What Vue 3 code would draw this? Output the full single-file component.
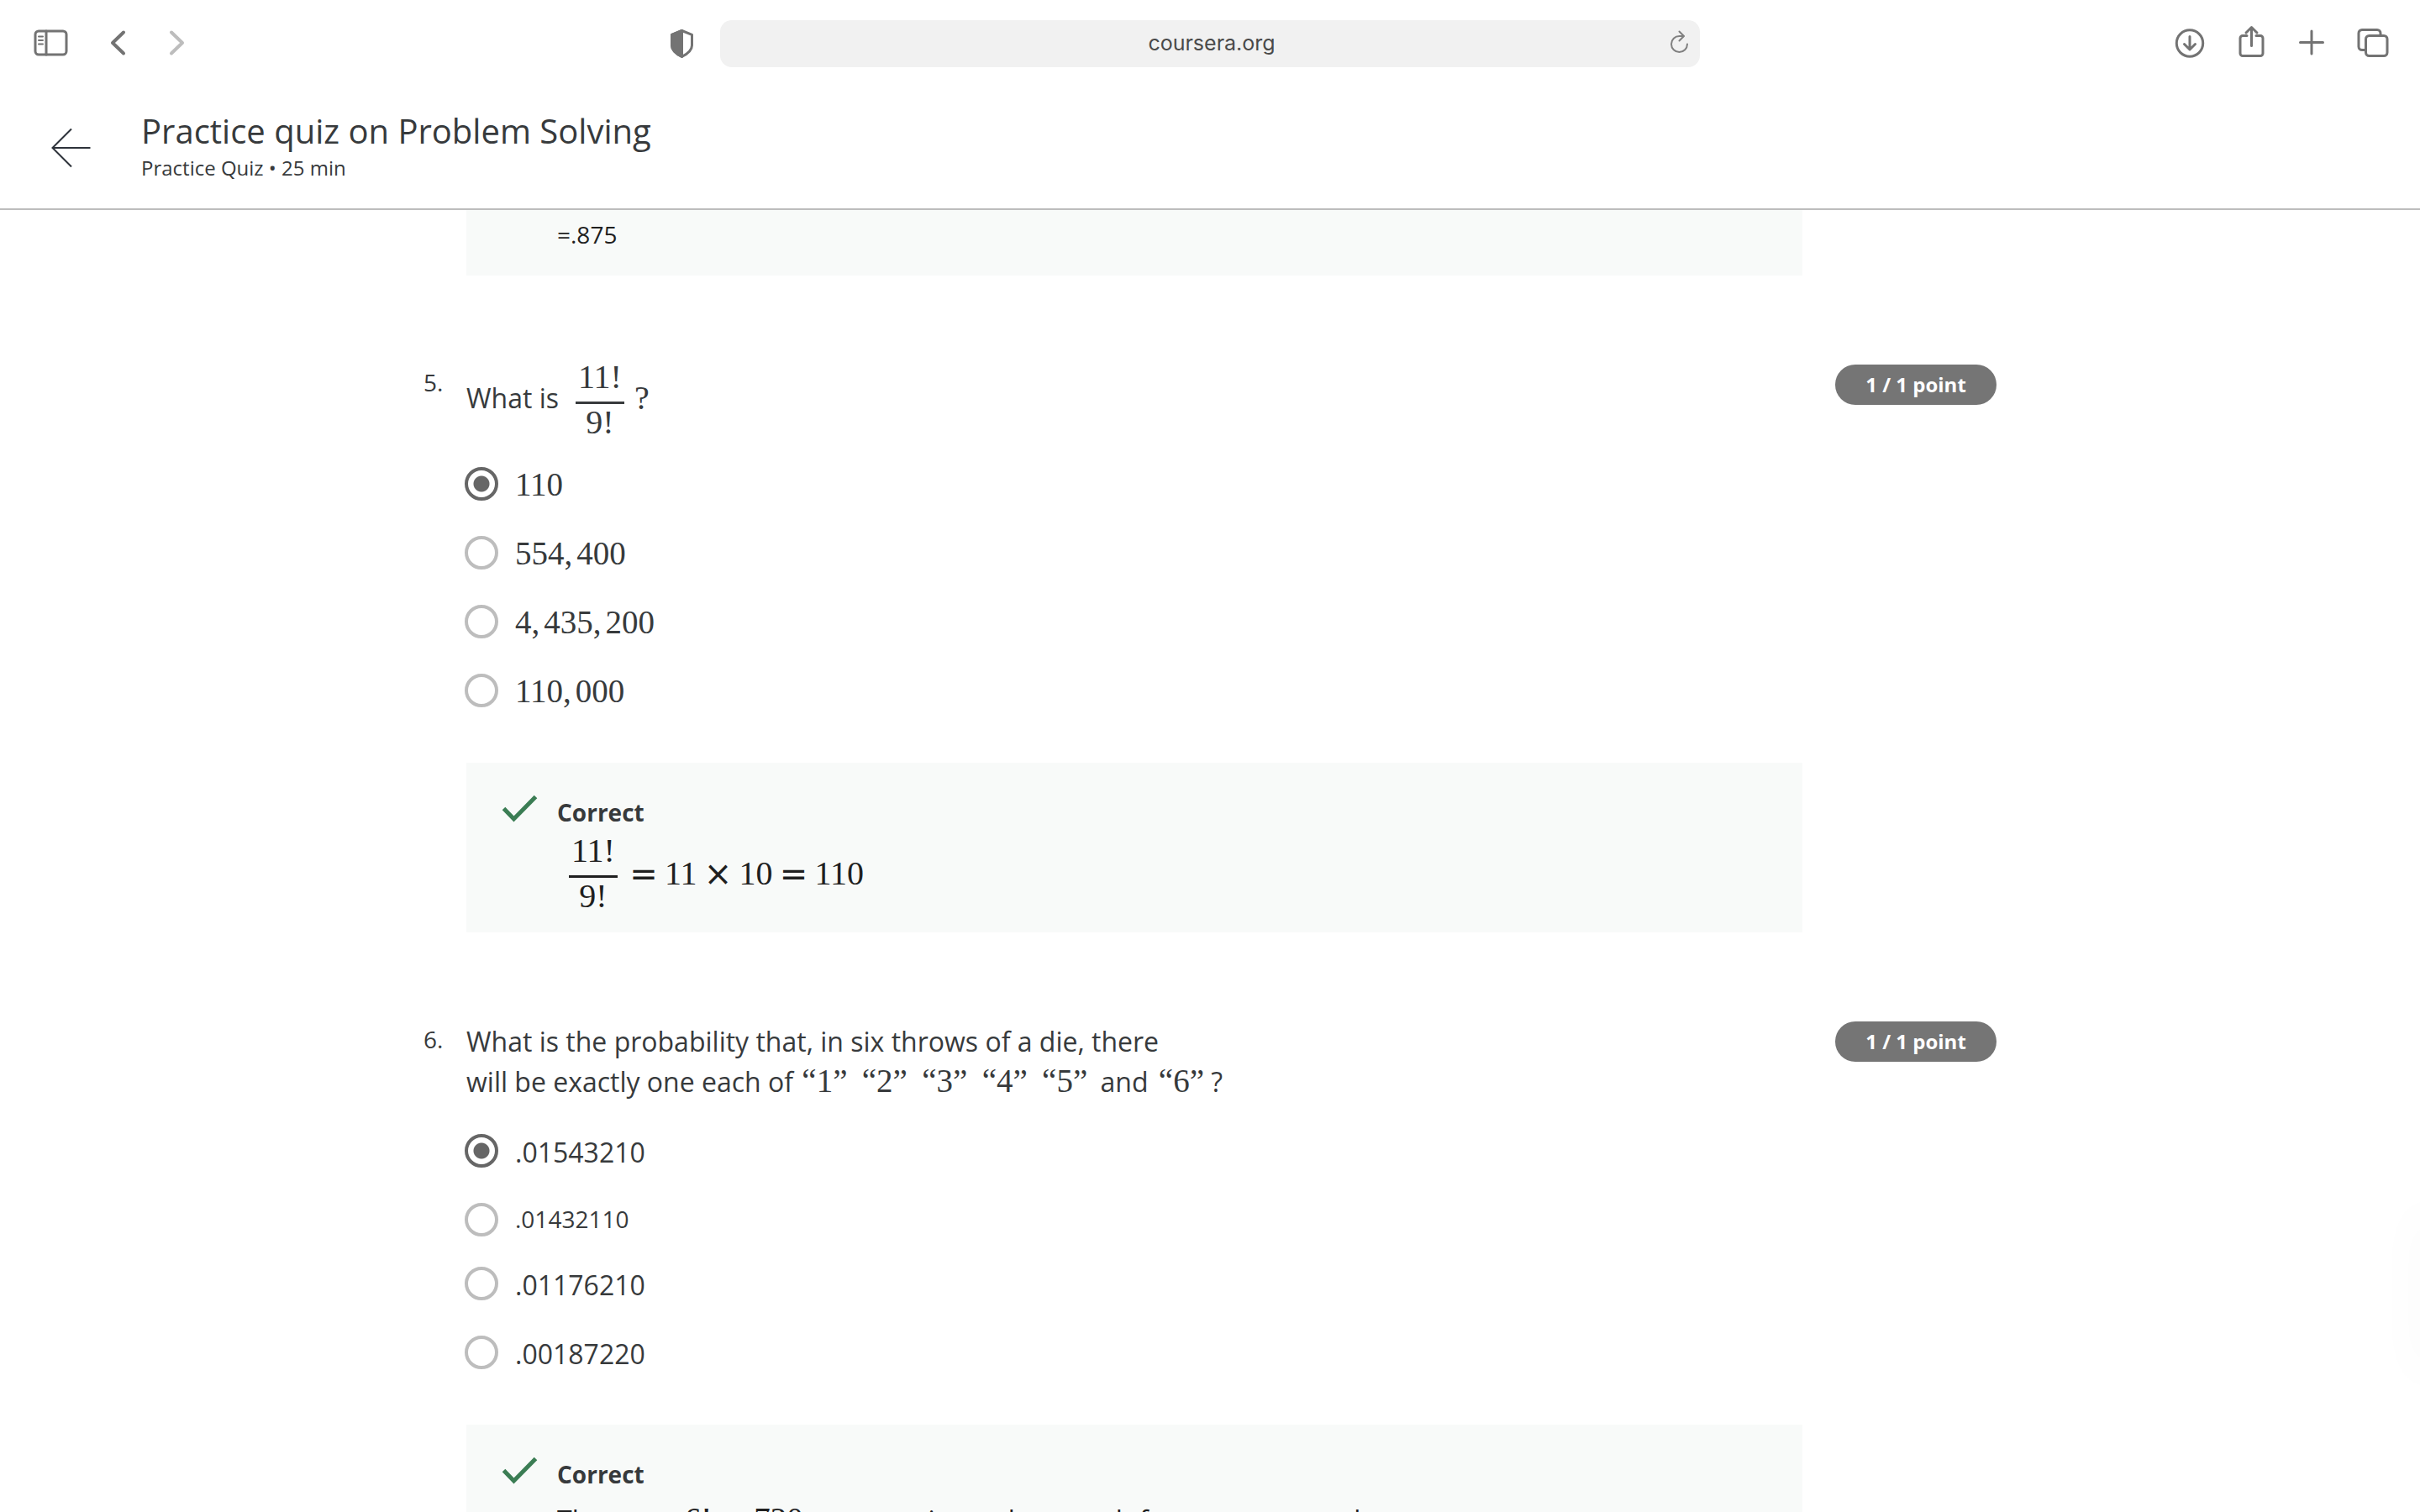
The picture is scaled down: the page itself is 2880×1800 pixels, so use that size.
<script setup>
import { ref } from 'vue'

const answer5 = ref('110')
const answer6 = ref('.01543210')

// Thousands groups are set apart with a thin space, as in display maths
const options5 = [
  { value: '110', groups: ['110'] },
  { value: '554400', groups: ['554,', '400'] },
  { value: '4435200', groups: ['4,', '435,', '200'] },
  { value: '110000', groups: ['110,', '000'] },
]

const options6 = [
  { value: '.01543210' },
  { value: '.01432110', small: true },
  { value: '.01176210' },
  { value: '.00187220' },
]

const faces = ['“1”', '“2”', '“3”', '“4”', '“5”']
</script>

<template>
  <div class="page">
    <nav class="toolbar" aria-label="Browser">
      <div class="tools tools-left">
        <button class="tool" aria-label="Show sidebar">
          <svg viewBox="0 0 40 40">
            <rect x="2" y="5" width="37" height="28" rx="4" />
            <path d="M15 5v28" />
            <path d="M6 11.500h5M6 16h5M6 20.500h5" stroke-width="2" />
          </svg>
        </button>
        <div class="history">
          <button class="tool" aria-label="Back">
            <svg viewBox="0 0 40 40"><path class="thick" d="M27 6.500L14 19l13 12.500" /></svg>
          </button>
          <button class="tool dim" aria-label="Forward">
            <svg viewBox="0 0 40 40"><path class="thick" d="M14 6.500L27 19 14 31.500" /></svg>
          </button>
        </div>
        <button class="tool shield" aria-label="Privacy report">
          <svg viewBox="0 0 40 40">
            <path d="M20.500 4.500L32.500 9.300V22c0 6-5 10-12 13.500C13.500 32 8.500 28 8.500 22V9.300z" />
            <path class="solid" d="M20.500 4.500V35.500C13.500 32 8.500 28 8.500 22V9.300z" />
          </svg>
        </button>
      </div>
      <div class="address">
        <input type="text" aria-label="Address" value="coursera.org" />
        <button class="reload" aria-label="Reload">
          <svg viewBox="0 0 28 32">
            <path d="M23 17.500a9.500 9.500 0 1 1-9.500-9.500h5" />
            <path d="M13.500 2.500l5.500 5.500-5.500 5.500" />
          </svg>
        </button>
      </div>
      <div class="tools tools-right">
        <button class="tool" aria-label="Downloads">
          <svg viewBox="0 0 40 40">
            <circle cx="21" cy="19.500" r="15.700" />
            <path d="M21 11.500v15M14.500 20.500l6.500 6.500 6.500-6.500" />
          </svg>
        </button>
        <button class="tool" aria-label="Share">
          <svg viewBox="0 0 40 40">
            <path d="M16 10.500h-5a3 3 0 0 0-3 3V31.500a3 3 0 0 0 3 3h21a3 3 0 0 0 3-3V13.500a3 3 0 0 0-3-3h-5" />
            <path d="M21.500 22.500V1M15 7l6.500-6.500L28 7" />
          </svg>
        </button>
        <button class="tool" aria-label="New tab">
          <svg viewBox="0 0 40 40"><path d="M20 5v27M6.500 18.500h27" /></svg>
        </button>
        <button class="tool" aria-label="Tab overview">
          <svg viewBox="0 0 40 40">
            <path d="M11.500 27.500H7a4 4 0 0 1-4-4V7.500a4 4 0 0 1 4-4h18a4 4 0 0 1 4 4v2.500" />
            <rect x="11.500" y="10.500" width="25.500" height="24" rx="4" />
          </svg>
        </button>
      </div>
    </nav>

    <header class="quiz-header">
      <a class="back" href="#" aria-label="Back to course">
        <svg viewBox="0 0 48 48"><path d="M47.500 26H2.500M25 3.500L2.500 26 25 48.500" /></svg>
      </a>
      <div>
        <h1>Practice quiz on Problem Solving</h1>
        <p>Practice Quiz • 25 min</p>
      </div>
    </header>

    <main class="quiz">
      <section class="question">
        <div class="feedback tail">
          <div class="feedback-body"><p class="note">=.875</p></div>
        </div>
      </section>

      <section class="question">
        <span class="number">5.</span>
        <div class="body">
          <div class="prompt-math">
            <span class="words">What is</span>
            <span class="fraction"><span class="num">11!</span><span class="den">9!</span></span>
            <span class="words math">?</span>
          </div>
          <div class="options" role="radiogroup" aria-label="Question 5">
            <label v-for="o in options5" :key="o.value" class="option">
              <input v-model="answer5" type="radio" name="q5" :value="o.value" />
              <span class="option-text"><span v-for="g in o.groups" :key="g" class="digits">{{ g }}</span></span>
            </label>
          </div>
        </div>
        <span class="points">1 / 1 point</span>
        <div class="feedback">
          <svg class="check" viewBox="0 0 44 34"><path d="M2.500 16.500L14.500 29 40.500 2.500" /></svg>
          <div class="feedback-body">
            <h2>Correct</h2>
            <div class="equation">
              <span class="fraction"><span class="num">11!</span><span class="den">9!</span></span>
              <span class="op">=</span><span>11</span><span class="op">×</span><span>10</span><span class="op">=</span><span>110</span>
            </div>
          </div>
        </div>
      </section>

      <section class="question">
        <span class="number">6.</span>
        <div class="body">
          <p class="prompt">
            What is the probability that, in six throws of a die, there<br />
            will be exactly one each of
            <template v-for="f in faces" :key="f"><span class="face">{{ f }}</span>{{ ' ' }}</template>
            and <span class="face last">“6”</span> ?
          </p>
          <div class="options" role="radiogroup" aria-label="Question 6">
            <label v-for="o in options6" :key="o.value" class="option" :class="{ small: o.small }">
              <input v-model="answer6" type="radio" name="q6" :value="o.value" />
              <span class="option-text">{{ o.value }}</span>
            </label>
          </div>
        </div>
        <span class="points">1 / 1 point</span>
        <div class="feedback">
          <svg class="check" viewBox="0 0 44 34"><path d="M2.500 16.500L14.500 29 40.500 2.500" /></svg>
          <div class="feedback-body">
            <h2>Correct</h2>
            <p class="explain">
              There are <span class="digits">6!<span class="equals">=</span>720</span> permutations where each face occurs exactly once.
            </p>
          </div>
        </div>
      </section>
    </main>
    <div class="edge-shadow"></div>
  </div>
</template>

<style>
body {
  margin: 0;
  background: #fff;
}
</style>

<style scoped>
.page {
  position: relative;
  display: flex;
  flex-direction: column;
  height: 100vh;
  overflow: hidden;
  font-family: "Open Sans", "Noto Sans", sans-serif;
  color: #373a3c;
}
h1,
h2,
p {
  margin: 0;
  font-weight: 400;
}
button {
  padding: 0;
  border: 0;
  background: none;
}
svg {
  display: block;
  overflow: visible;
  fill: none;
  stroke: currentColor;
  stroke-width: 3;
  stroke-linecap: round;
  stroke-linejoin: round;
}

.toolbar {
  flex: none;
  display: grid;
  grid-template-columns: 1fr minmax(0, 1166px) 1fr;
  align-items: center;
  height: 104px;
  color: #737373;
}
.tools {
  display: flex;
  align-items: center;
}
.tools-left {
  gap: 40px;
  padding: 0 26px 0 40px;
}
.history {
  display: flex;
  gap: 30px;
}
.tools-right {
  justify-content: flex-end;
  gap: 33px;
  padding-right: 36px;
}
.tool {
  width: 40px;
  height: 40px;
  color: inherit;
}
.tool.dim {
  color: #bdbdbd;
}
.thick {
  stroke-width: 4;
}
.solid {
  fill: currentColor;
}
.shield {
  margin-left: auto;
}
.address {
  position: relative;
}
.address input {
  display: block;
  box-sizing: border-box;
  width: 100%;
  height: 56px;
  padding: 0 46px 2px 50px;
  border: 0;
  border-radius: 14px;
  background: #f1f1f1;
  color: #4a4a4a;
  font: 25px/32px Inter, sans-serif;
  text-align: center;
}
.reload {
  position: absolute;
  top: 11px;
  right: 10px;
  width: 28px;
  height: 32px;
  color: #808080;
}
.reload svg {
  stroke-width: 2;
}

.quiz-header {
  flex: none;
  display: flex;
  align-items: center;
  gap: 60px;
  padding: 28px 60px 32px;
  border-bottom: 2px solid #bdbdbd;
}
.back {
  width: 48px;
  color: #2d323a;
}
.back svg {
  stroke-width: 2;
  stroke-linecap: butt;
  stroke-linejoin: miter;
}
.quiz-header h1 {
  font-size: 40px;
  line-height: 48px;
}
.quiz-header p {
  margin-top: 4px;
  font-size: 24px;
  line-height: 32px;
}

.quiz {
  flex: 1;
  min-height: 0;
  overflow: hidden;
  box-sizing: border-box;
  width: 100%;
  max-width: 1872px;
  margin: 0 auto;
}
.question {
  display: grid;
  grid-template-columns: 51px 1fr 39px 192px;
  align-items: start;
  margin-bottom: 106px;
}
.number {
  font-size: 28px;
  line-height: 42px;
}
.points {
  grid-column: 4;
  border-radius: 24px;
  background: #757575;
  color: #fff;
  font-size: 24px;
  font-weight: 700;
  line-height: 48px;
  text-align: center;
}
.prompt {
  font-size: 32px;
  line-height: 48px;
}
.prompt-math {
  display: flex;
  align-items: flex-start;
  font-size: 32px;
  line-height: 48px;
}
.words {
  margin-top: 16px;
}
.math,
.fraction,
.equation {
  font-family: "Liberation Serif", serif;
  font-size: 40px;
}
.prompt-math .fraction {
  margin: 0 12px 0 20px;
}
.fraction {
  flex: none;
  display: flex;
  flex-direction: column;
  width: 58px;
  text-align: center;
}
.num {
  padding-bottom: 14px;
  border-bottom: 3px solid currentColor;
  line-height: 30px;
}
.den {
  padding-top: 7px;
  line-height: 30px;
}
.face,
.digits {
  font-family: "Liberation Serif", serif;
  font-size: 39px;
  line-height: 1;
}
.face {
  margin: 0 7px 0 2px;
}
.face.last {
  margin: 0 0 0 4px;
}
.digits + .digits {
  margin-left: 5px;
}

.options {
  margin-top: 36px;
}
.option {
  display: flex;
  align-items: flex-start;
  gap: 20px;
  margin-bottom: 34px;
  font-size: 32px;
  line-height: 48px;
}
.option.small {
  font-size: 28px;
  line-height: 42px;
}
.option-text {
  height: 1lh;
}
.option input {
  appearance: none;
  flex: none;
  box-sizing: border-box;
  width: 40px;
  height: 40px;
  margin: 2px 0 -2px -2px;
  border: 4px solid #bdbdbd;
  border-radius: 50%;
  background: #fff;
}
.option input:checked {
  border-color: #666;
  background: radial-gradient(circle, #666 0 9px, #fff 10px);
}

.feedback {
  grid-column: 2;
  display: flex;
  gap: 22px;
  margin-top: 26px;
  padding: 38px 42px 28px;
  background: #f8faf9;
}
.feedback.tail {
  margin-top: 0;
  padding: 8px 108px 28px;
}
.feedback h2 {
  font-size: 28px;
  font-weight: 700;
  line-height: 42px;
}
.note {
  color: #1f1f1f;
  font-size: 28px;
  line-height: 42px;
}
.check {
  flex: none;
  width: 44px;
  height: 34px;
  stroke: #3b7d54;
  stroke-width: 5;
  stroke-linecap: butt;
  stroke-linejoin: miter;
}
.equation {
  display: flex;
  align-items: flex-start;
  height: 84px;
  margin-top: 10px;
  color: #1f1f1f;
  line-height: 84px;
}
.equation .fraction {
  margin: 0 6px 0 14px;
}
.op {
  width: 50px;
  font-family: "DejaVu Sans", sans-serif;
  text-align: center;
}
.equals {
  display: inline-block;
  width: 50px;
  text-align: center;
}
.explain {
  margin-top: 10px;
  color: #1f1f1f;
  font-size: 32px;
  line-height: 48px;
}

.edge-shadow {
  position: absolute;
  top: 1440px;
  right: -20px;
  width: 20px;
  height: 200px;
  box-shadow: 0 0 60px rgba(0, 0, 0, 0.04);
}
</style>
